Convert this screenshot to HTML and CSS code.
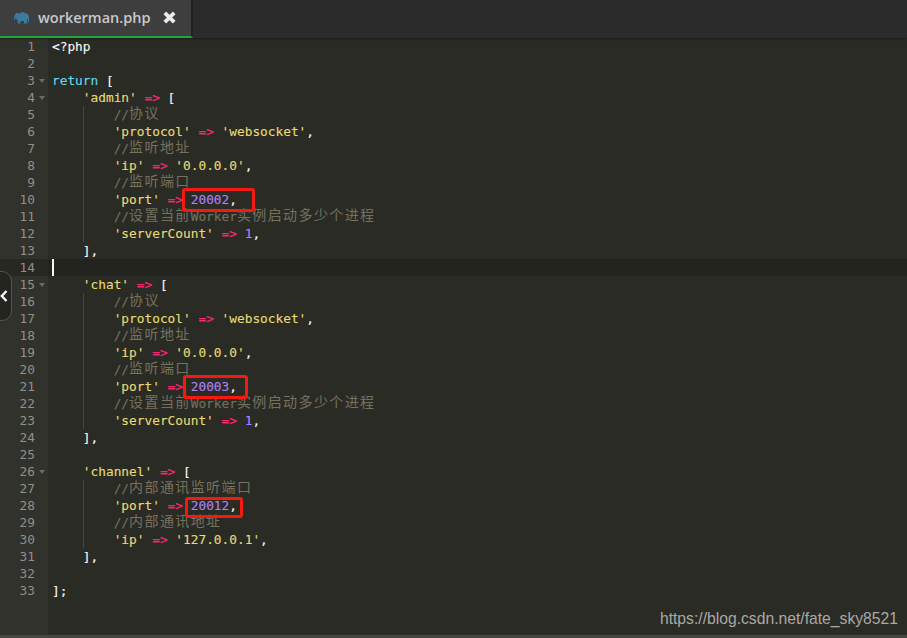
FILE: index.html
```html
<!DOCTYPE html>
<html lang="zh">
<head>
<meta charset="utf-8">
<title>workerman.php</title>
<link rel="stylesheet" href="styles.css">
</head>
<body>
<div class="app">
  <div class="tabbar">
    <div class="tab">
      <svg class="tab-icon" width="15" height="12" viewBox="0 0 15 12"><path fill="#3d7a9c" d="M0 7.500C0 3.500 1 1 3.500 1 4.500 1 5 1.500 5.500 2 6 .8 7 .3 8.500.3c1 0 1.500.3 2 .7 2.500 0 4 1.500 4.500 4v5.500h-1V6.500l-1 1v4H10V9H6.500v2.500H3.800V8.500C2.500 8 2 6 2 5 1.300 5.500 1.200 7 1.200 8.500z"/></svg>
      <span class="tab-name">workerman.php</span>
      <svg class="tab-close" width="13" height="13" viewBox="0 0 13 13"><path fill="none" stroke="#eaeaea" stroke-width="3.800" d="M1.800 1.800l9.400 9.400M11.200 1.800l-9.400 9.400"/></svg>
    </div>
  </div>
  <div class="editor">
    <div class="gutter">
      <div class="num">1</div>
      <div class="num">2</div>
      <div class="num fold">3</div>
      <div class="num fold">4</div>
      <div class="num">5</div>
      <div class="num">6</div>
      <div class="num">7</div>
      <div class="num">8</div>
      <div class="num">9</div>
      <div class="num">10</div>
      <div class="num">11</div>
      <div class="num">12</div>
      <div class="num">13</div>
      <div class="num active">14</div>
      <div class="num fold">15</div>
      <div class="num">16</div>
      <div class="num">17</div>
      <div class="num">18</div>
      <div class="num">19</div>
      <div class="num">20</div>
      <div class="num">21</div>
      <div class="num">22</div>
      <div class="num">23</div>
      <div class="num">24</div>
      <div class="num">25</div>
      <div class="num fold">26</div>
      <div class="num">27</div>
      <div class="num">28</div>
      <div class="num">29</div>
      <div class="num">30</div>
      <div class="num">31</div>
      <div class="num">32</div>
      <div class="num">33</div>
    </div>
    <div class="code">
      <div class="line">&lt;?php</div>
      <div class="line"></div>
      <div class="line"><span class="kw">return</span> [</div>
      <div class="line">    <span class="str">'admin'</span> <span class="op">=&gt;</span> [</div>
      <div class="line">    <span class="guide">    </span><span class="cm">//<span class="cjk">协议</span></span></div>
      <div class="line">    <span class="guide">    </span><span class="str">'protocol'</span> <span class="op">=&gt;</span> <span class="str">'websocket'</span>,</div>
      <div class="line">    <span class="guide">    </span><span class="cm">//<span class="cjk">监听地址</span></span></div>
      <div class="line">    <span class="guide">    </span><span class="str">'ip'</span> <span class="op">=&gt;</span> <span class="str">'0.0.0.0'</span>,</div>
      <div class="line">    <span class="guide">    </span><span class="cm">//<span class="cjk">监听端口</span></span></div>
      <div class="line">    <span class="guide">    </span><span class="str">'port'</span> <span class="op">=&gt;</span> <span class="nr">20002</span>,</div>
      <div class="line">    <span class="guide">    </span><span class="cm">//<span class="cjk">设置当前</span>Worker<span class="cjk">实例启动多少个进程</span></span></div>
      <div class="line">    <span class="guide">    </span><span class="str">'serverCount'</span> <span class="op">=&gt;</span> <span class="nr">1</span>,</div>
      <div class="line">    ],</div>
      <div class="line current"><span class="caret"></span></div>
      <div class="line">    <span class="str">'chat'</span> <span class="op">=&gt;</span> [</div>
      <div class="line">    <span class="guide">    </span><span class="cm">//<span class="cjk">协议</span></span></div>
      <div class="line">    <span class="guide">    </span><span class="str">'protocol'</span> <span class="op">=&gt;</span> <span class="str">'websocket'</span>,</div>
      <div class="line">    <span class="guide">    </span><span class="cm">//<span class="cjk">监听地址</span></span></div>
      <div class="line">    <span class="guide">    </span><span class="str">'ip'</span> <span class="op">=&gt;</span> <span class="str">'0.0.0.0'</span>,</div>
      <div class="line">    <span class="guide">    </span><span class="cm">//<span class="cjk">监听端口</span></span></div>
      <div class="line">    <span class="guide">    </span><span class="str">'port'</span> <span class="op">=&gt;</span> <span class="nr">20003</span>,</div>
      <div class="line">    <span class="guide">    </span><span class="cm">//<span class="cjk">设置当前</span>Worker<span class="cjk">实例启动多少个进程</span></span></div>
      <div class="line">    <span class="guide">    </span><span class="str">'serverCount'</span> <span class="op">=&gt;</span> <span class="nr">1</span>,</div>
      <div class="line">    ],</div>
      <div class="line"></div>
      <div class="line">    <span class="str">'channel'</span> <span class="op">=&gt;</span> [</div>
      <div class="line">    <span class="guide">    </span><span class="cm">//<span class="cjk">内部通讯监听端口</span></span></div>
      <div class="line">    <span class="guide">    </span><span class="str">'port'</span> <span class="op">=&gt;</span> <span class="nr">20012</span>,</div>
      <div class="line">    <span class="guide">    </span><span class="cm">//<span class="cjk">内部通讯地址</span></span></div>
      <div class="line">    <span class="guide">    </span><span class="str">'ip'</span> <span class="op">=&gt;</span> <span class="str">'127.0.0.1'</span>,</div>
      <div class="line">    ],</div>
      <div class="line"></div>
      <div class="line">];</div>
    </div>
  </div>
  <div class="statusline"></div>
  <div class="mark mark-a"></div>
  <div class="mark mark-b"></div>
  <div class="mark mark-c"></div>
  <div class="handle">
    <svg width="8" height="12" viewBox="0 0 8 12"><path fill="none" stroke="#f4f4f4" stroke-width="2.400" d="M6.500 1L1.800 6l4.700 5"/></svg>
  </div>
  <div class="watermark">https://blog.csdn.net/fate_sky8521</div>
</div>
</body>
</html>
```
FILE: styles.css
```css
* { box-sizing: border-box; }
html, body { margin: 0; padding: 0; }
body { width: 907px; height: 638px; overflow: hidden; background: #2a2b25; }
.app { position: relative; width: 907px; height: 638px; display: flex; flex-direction: column; }
.tabbar { height: 38px; background: #2b2b2b; display: flex; flex: none; box-shadow: 0 1px 2px rgba(0,0,0,.35); position: relative; z-index: 1; }
.tab { width: 193px; height: 38px; background: #3e3e3e; border-bottom: 2px solid #1fa637; border-right: 2px solid #222; display: flex; align-items: center; padding: 0 0 1px 14px; }
.tab-icon { flex: none; }
.tab-name { font-family: "Open Sans", sans-serif; font-size: 14.500px; font-weight: 600; color: #c9c9c9; margin-left: 9px; }
.tab-close { flex: none; margin-left: 12px; }
.editor { flex: 1; display: flex; min-height: 0; }
.gutter { width: 48px; flex: none; background: #31322b; font-family: "DejaVu Sans Mono", monospace; font-size: 12.800px; line-height: 17px; color: #8f908a; }
.num { height: 17px; text-align: right; padding-right: 13px; position: relative; }
.num.active { background: #272822; }
.fold::after { content: ""; position: absolute; left: 39px; top: 7px; border: 3px solid transparent; border-top: 4px solid #6a6b63; border-bottom: 0; }
.code { flex: 1; font-family: "DejaVu Sans Mono", monospace; font-size: 12.800px; line-height: 17px; color: #f8f8f2; -webkit-text-stroke: 0.120px; }
.line { height: 17px; padding-left: 4px; white-space: pre; }
.line.current { background: #23241f; }
.caret { display: inline-block; width: 2px; height: 17px; background: #f8f8f0; vertical-align: top; }
.guide { display: inline-block; height: 17px; vertical-align: top; box-shadow: inset 1px 0 0 #45463f; }
.kw { color: #66d9ef; }
.str { color: #e6db74; }
.op { color: #f92672; }
.nr { color: #ae81ff; }
.cm { color: #75715e; }
.cjk { font-family: "Noto Sans CJK SC", sans-serif; font-size: 14px; letter-spacing: 1.400px; line-height: 0; vertical-align: 1px; -webkit-text-stroke: 0; }
.statusline { height: 3px; flex: none; background: #45463f; }
.mark { position: absolute; border: 3px solid #f51a10; border-radius: 3px; }
.mark-a { left: 182px; top: 188px; width: 73px; height: 24px; }
.mark-b { left: 183px; top: 375px; width: 65px; height: 24px; }
.mark-c { left: 185px; top: 497px; width: 58px; height: 21px; }
.handle { position: absolute; left: -2px; top: 271px; width: 14px; height: 50px; background: #242520; border: 1px solid #55564f; border-radius: 0 10px 10px 0; display: flex; align-items: center; padding-left: 1px; }
.watermark { position: absolute; right: 9px; top: 610px; font-family: "Liberation Sans", sans-serif; font-size: 15.700px; line-height: 18px; color: #a9a9a5; white-space: nowrap; }
```
